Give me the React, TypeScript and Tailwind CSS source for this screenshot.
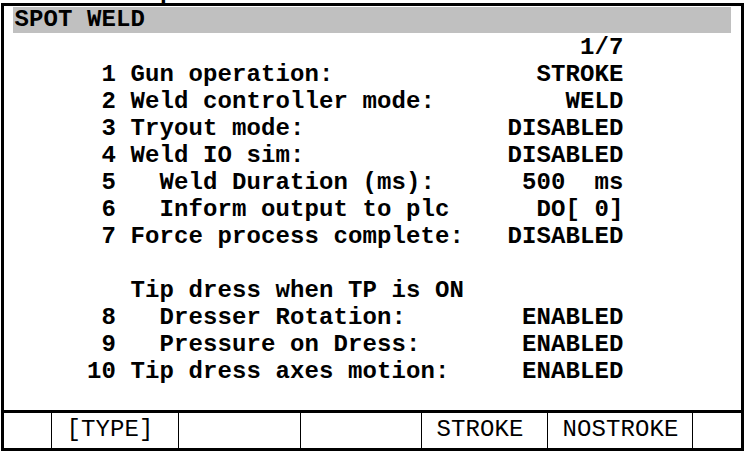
import React from "react";

const COLS = 42;

// one line of the pendant screen: label on the left, value pushed to the right edge
const line = (left: string, right = "") =>
  left.padEnd(COLS - right.length, " ") + right;

const rows: string[] = [
  line("", "1/7"),
  line("      1 Gun operation:", "STROKE"),
  line("      2 Weld controller mode:", "WELD"),
  line("      3 Tryout mode:", "DISABLED"),
  line("      4 Weld IO sim:", "DISABLED"),
  line("      5   Weld Duration (ms):", "500  ms"),
  line("      6   Inform output to plc", "DO[ 0]"),
  line("      7 Force process complete:", "DISABLED"),
  line(""),
  line("        Tip dress when TP is ON"),
  line("      8   Dresser Rotation:", "ENABLED"),
  line("      9   Pressure on Dress:", "ENABLED"),
  line("     10 Tip dress axes motion:", "ENABLED")
];

// function key strip, widths include the 1px divider on the left
const keys = [
  { label: "", width: "w-[47px]", first: true },
  { label: "[TYPE]", width: "w-[127px]" },
  { label: "", width: "w-[122px]" },
  { label: "", width: "w-[121px]" },
  { label: "STROKE", width: "w-[126px]" },
  { label: "NOSTROKE", width: "w-[145px]" },
  { label: "", width: "w-[49px]" }
];

const App: React.FC = () => {
  return (
    <div className="w-[746px] h-[454px] bg-white overflow-hidden font-['Liberation_Mono',monospace] text-black">
      {/* descender of the line above, clipped by the window edge */}
      <div className="h-[3px] overflow-hidden pl-[160px]">
        <div className="mt-[-20.5px] text-[24px] leading-[24px] font-bold">p</div>
      </div>

      <div className="ml-[1px] w-[743px] h-[448px] border-[3px] border-black flex flex-col">
        <div className="mt-[1px] ml-[9px] mr-[10px] h-[26px] bg-[#c0c0c0] pl-[1.5px] text-[24px] leading-[26px] font-bold tracking-[0.1px] whitespace-pre">
          SPOT WELD
        </div>

        <div className="mt-[1px] pl-[10.5px] flex flex-col">
          {rows.map((r, i) => (
            <div
              key={i}
              className="h-[27px] text-[24px] leading-[27px] font-bold tracking-[0.1px] whitespace-pre"
            >
              {r}
            </div>
          ))}
        </div>

        <div className="flex-1" />

        <div className="h-[38px] border-t-[3px] border-black flex">
          {keys.map((k, i) => (
            <div
              key={i}
              className={`${k.width} h-full ${
                k.first ? "" : "border-l border-black"
              } pl-[14.5px] text-[24px] leading-[34px] font-normal tracking-[0.1px] whitespace-pre`}
            >
              {k.label}
            </div>
          ))}
        </div>
      </div>
    </div>
  );
};

export default App;
